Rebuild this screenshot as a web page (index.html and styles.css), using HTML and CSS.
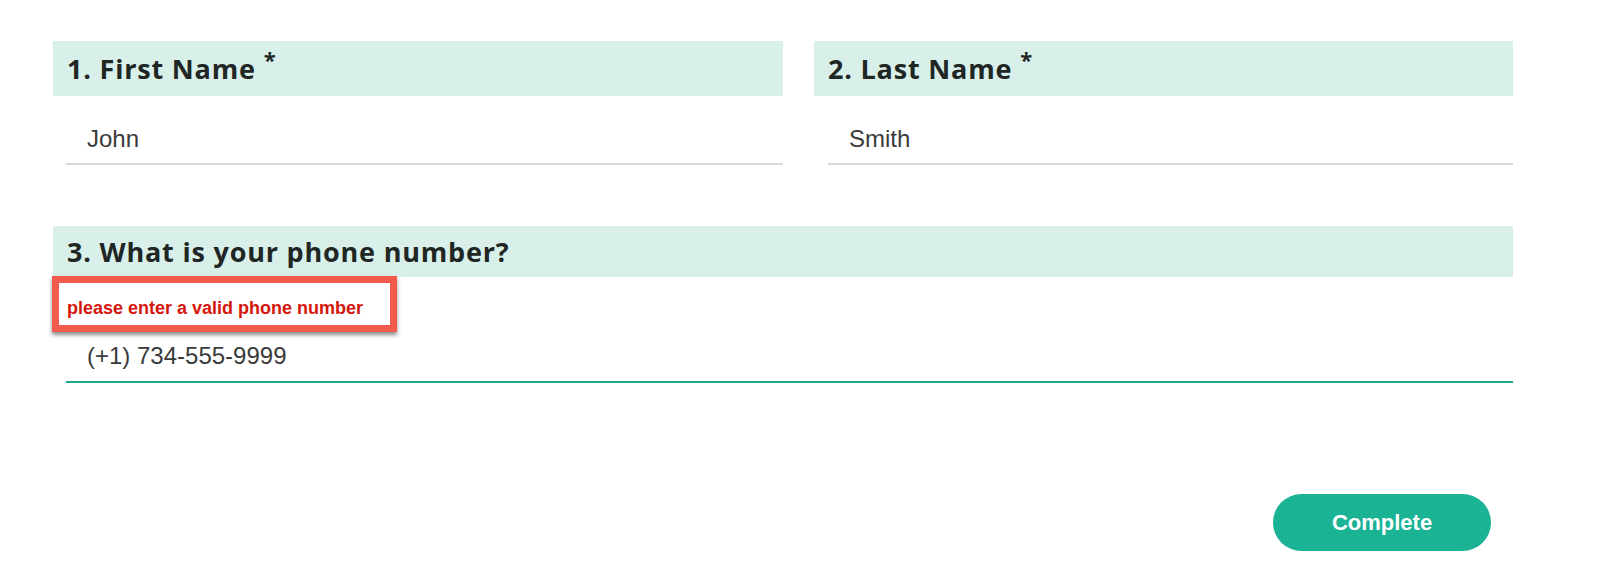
FILE: index.html
```html
<!DOCTYPE html>
<html>
<head>
<meta charset="utf-8">
<link rel="stylesheet" href="styles.css">
</head>
<body>
<div class="form">
  <div class="row-two">
    <div class="field">
      <div class="q-head"><span class="q-title">1. First Name</span><span class="req">*</span></div>
      <div class="answer">John</div>
    </div>
    <div class="field">
      <div class="q-head"><span class="q-title">2. Last Name</span><span class="req">*</span></div>
      <div class="answer answer-right">Smith</div>
    </div>
  </div>
  <div class="field field-wide">
    <div class="q-head q-head-short"><span class="q-title">3. What is your phone number?</span></div>
    <div class="error-box"><span class="error-text">please enter a valid phone number</span></div>
    <div class="answer answer-active">(+1) 734-555-9999</div>
  </div>
  <div class="actions">
    <button class="btn-complete">Complete</button>
  </div>
</div>
</body>
</html>
```

FILE: styles.css
```css
html, body {
  margin: 0;
  padding: 0;
  background: #ffffff;
}
.form {
  padding: 41px 0 0 53px;
  width: 1460px;
}
.row-two {
  display: grid;
  grid-template-columns: 730px 699px;
  column-gap: 31px;
}
.field {
  display: flex;
  flex-direction: column;
}
.field-wide {
  margin-top: 61px;
}
.q-head {
  height: 55px;
  background: #d9f0ea;
  display: flex;
  align-items: center;
  padding-left: 14px;
  box-sizing: border-box;
  font-family: "Open Sans", "Lato", sans-serif;
  font-weight: 700;
  color: #202624;
}
.q-head-short {
  height: 51px;
}
.q-title {
  font-size: 27px;
  line-height: 32px;
  letter-spacing: 0.8px;
}
.req {
  font-size: 22px;
  line-height: 22px;
  margin-left: 8px;
  align-self: flex-start;
  margin-top: 7px;
}
.answer {
  margin-left: 13px;
  padding: 29px 0 10px 21px;
  font-family: "Liberation Sans", Arial, sans-serif;
  font-size: 24px;
  line-height: 28px;
  color: #3a3a3a;
  border-bottom: 2px solid #dadada;
}
.answer-right {
  margin-left: 14px;
}
.answer-active {
  padding-top: 10px;
  padding-bottom: 11px;
  border-bottom-color: #1aa888;
}
.error-box {
  align-self: flex-start;
  margin: -1px 0 0 -1px;
  width: 345px;
  box-sizing: border-box;
  border: 7px solid #f45b4c;
  padding: 15px 8px 6px 8px;
  background: #fff;
  box-shadow: 0 3px 4px rgba(0,0,0,0.45);
  position: relative;
  z-index: 1;
}
.error-text {
  font-family: "Liberation Sans", Arial, sans-serif;
  font-weight: 700;
  font-size: 18px;
  line-height: 21px;
  color: #d4160d;
  display: block;
}
.actions {
  display: flex;
  justify-content: flex-end;
  margin-top: 111px;
  padding-right: 22px;
}
.btn-complete {
  width: 218px;
  height: 57px;
  border: none;
  border-radius: 29px;
  background: #1ab394;
  color: #ffffff;
  font-family: "Liberation Sans", Arial, sans-serif;
  font-weight: 700;
  font-size: 22px;
  padding: 0;
  cursor: pointer;
}
```
